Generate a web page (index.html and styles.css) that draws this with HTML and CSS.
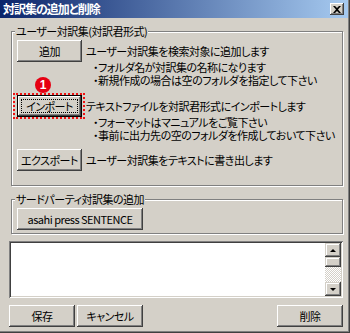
FILE: index.html
```html
<!DOCTYPE html>
<html lang="ja">

<head>
    <title>対訳集の追加と削除</title>
    <meta charset="utf-8">
    <link rel="stylesheet" href="styles.css">
</head>

<body>
    <div class="dialog">
        <div class="titlebar">
            <span class="title">対訳集の追加と削除</span>
            <span class="close">
                <svg width="8" height="7" viewBox="0 0 8 7"><path d="M0 0h2l2 2 2-2h2L5 3.5 8 7H6L4 5 2 7H0l3-3.5z" fill="#000"/></svg>
            </span>
        </div>

        <div class="content">
            <fieldset class="group">
                <legend>ユーザー対訳集(対訳君形式)</legend>
                <div class="row">
                    <button class="btn">追加</button>
                    <div class="desc">
                        <p class="lead">ユーザー対訳集を検索対象に追加します</p>
                        <div class="notes">
                            <p class="note">・フォルダ名が対訳集の名称になります</p>
                            <p class="note">・新規作成の場合は空のフォルダを指定して下さい</p>
                        </div>
                    </div>
                </div>
                <div class="row row-import">
                    <span class="callout">
                        <button class="btn default">インポート</button>
                        <span class="badge">1</span>
                    </span>
                    <div class="desc">
                        <p class="lead">テキストファイルを対訳君形式にインポートします</p>
                        <div class="notes">
                            <p class="note">・フォーマットはマニュアルをご覧下さい</p>
                            <p class="note">・事前に出力先の空のフォルダを作成しておいて下さい</p>
                        </div>
                    </div>
                </div>
                <div class="row row-export">
                    <button class="btn">エクスポート</button>
                    <div class="desc">
                        <p class="lead">ユーザー対訳集をテキストに書き出します</p>
                    </div>
                </div>
            </fieldset>

            <fieldset class="group group-third">
                <legend>サードパーティ対訳集の追加</legend>
                <button class="btn wide">asahi press SENTENCE</button>
            </fieldset>

            <div class="listbox">
                <div class="list"></div>
                <div class="scrollbar">
                    <span class="sb-btn"><span class="arrow up"></span></span>
                    <span class="sb-thumb"></span>
                    <span class="sb-track"></span>
                    <span class="sb-btn"><span class="arrow down"></span></span>
                </div>
            </div>

            <div class="footer">
                <button class="btn">保存</button>
                <button class="btn">キャンセル</button>
                <button class="btn push">削除</button>
            </div>
        </div>
    </div>
</body>

</html>
```

FILE: styles.css
```css
* {
    box-sizing: border-box;
}

body {
    margin: 0;
    padding: 0;
    background: #d4d0c8;
    color: #000;
    font-family: "Noto Sans CJK JP", "Noto Sans", sans-serif;
    font-size: 11px;
    font-feature-settings: "palt";
    letter-spacing: -0.5px;
}

.dialog {
    width: 350px;
    height: 333px;
    background: #d4d0c8;
    box-shadow: inset -1px -1px #404040, inset -2px -2px #808080;
    overflow: hidden;
}

.titlebar {
    display: flex;
    align-items: center;
    height: 18px;
    margin-right: 2px;
    padding: 0 4px 0 3px;
    background: linear-gradient(to right, #0a246a, #a6caf0);
}

.title {
    flex: 1;
    color: #fff;
    font-weight: bold;
    font-size: 12px;
    line-height: 18px;
    letter-spacing: -1px;
}

.close {
    display: flex;
    align-items: center;
    justify-content: center;
    width: 14px;
    height: 12px;
    background: #d4d0c8;
    box-shadow: inset -1px -1px #404040, inset 1px 1px #fff, inset -2px -2px #808080;
}

.content {
    padding: 0 7px 0 9px;
}

/* group boxes */
.group {
    margin: 7px 0 0 2px;
    padding: 2px 5px 14px;
    min-width: 0;
    border: 1px solid #808080;
    box-shadow: inset 1px 1px #fff, 1px 1px #fff;
}

.group legend {
    margin-left: -2px;
    padding: 0 1px;
    line-height: 13px;
    background: #d4d0c8;
}

.group-third {
    padding-bottom: 3px;
}

.row {
    display: grid;
    grid-template-columns: 65px 1fr;
    column-gap: 4px;
    align-items: start;
}

.row-import {
    margin-top: 8px;
}

.row-export {
    margin-top: 7px;
}

.desc p {
    margin: 0;
    white-space: nowrap;
}

.lead {
    line-height: 22px;
}

.notes {
    margin-top: -1px;
}

.note {
    padding-left: 7px;
    line-height: 13px;
}

/* buttons */
.btn {
    position: relative;
    width: 65px;
    height: 22px;
    padding: 0;
    border: 0;
    background: #d4d0c8;
    color: #000;
    font-family: inherit;
    font-size: 11px;
    font-feature-settings: "palt";
    letter-spacing: -0.5px;
    white-space: nowrap;
    box-shadow: inset -1px -1px #404040, inset 1px 1px #fff, inset -2px -2px #808080, inset 2px 2px #d4d0c8;
}

.btn.wide {
    width: 126px;
}

.btn.default {
    box-shadow: inset 0 0 0 1px #000, inset -2px -2px #404040, inset 2px 2px #fff, inset -3px -3px #808080, inset 3px 3px #d4d0c8;
}

.btn.default::after {
    content: "";
    position: absolute;
    top: 4px;
    left: 4px;
    right: 4px;
    bottom: 4px;
    border: 1px dotted #000;
}

.callout {
    position: relative;
    display: block;
    width: 65px;
    height: 22px;
}

.callout::before {
    content: "";
    position: absolute;
    top: -2px;
    bottom: -2px;
    left: -4px;
    right: -3px;
    border: 2px dotted #ee1111;
}

.badge {
    position: absolute;
    left: 18px;
    top: -18px;
    width: 16px;
    height: 16px;
    border-radius: 50%;
    background: #e60012;
    color: #fff;
    font-family: "Liberation Sans", sans-serif;
    font-weight: bold;
    font-size: 12px;
    line-height: 16px;
    letter-spacing: 0;
    text-align: center;
}

/* list with scrollbar */
.listbox {
    display: flex;
    height: 57px;
    margin-top: 7px;
    padding: 2px;
    background: #fff;
    box-shadow: inset 1px 1px #808080, inset -1px -1px #fff, inset 2px 2px #404040, inset -2px -2px #d4d0c8;
}

.list {
    flex: 1;
}

.scrollbar {
    display: flex;
    flex-direction: column;
    width: 16px;
}

.sb-btn,
.sb-thumb {
    display: flex;
    align-items: center;
    justify-content: center;
    background: #d4d0c8;
    box-shadow: inset -1px -1px #404040, inset 1px 1px #d4d0c8, inset -2px -2px #808080, inset 2px 2px #fff;
}

.sb-btn {
    height: 14px;
}

.sb-thumb {
    height: 10px;
}

.sb-track {
    flex: 1;
    background: repeating-conic-gradient(#d4d0c8 0 25%, #fff 0 50%) 0 0 / 2px 2px;
}

.arrow {
    width: 0;
    height: 0;
    border-left: 3px solid transparent;
    border-right: 3px solid transparent;
}

.arrow.up {
    border-bottom: 3px solid #000;
}

.arrow.down {
    border-top: 3px solid #000;
}

/* bottom buttons */
.footer {
    display: flex;
    gap: 2px;
    margin-top: 7px;
}

.footer .btn {
    width: 66px;
}

.footer .push {
    margin-left: auto;
}
```
